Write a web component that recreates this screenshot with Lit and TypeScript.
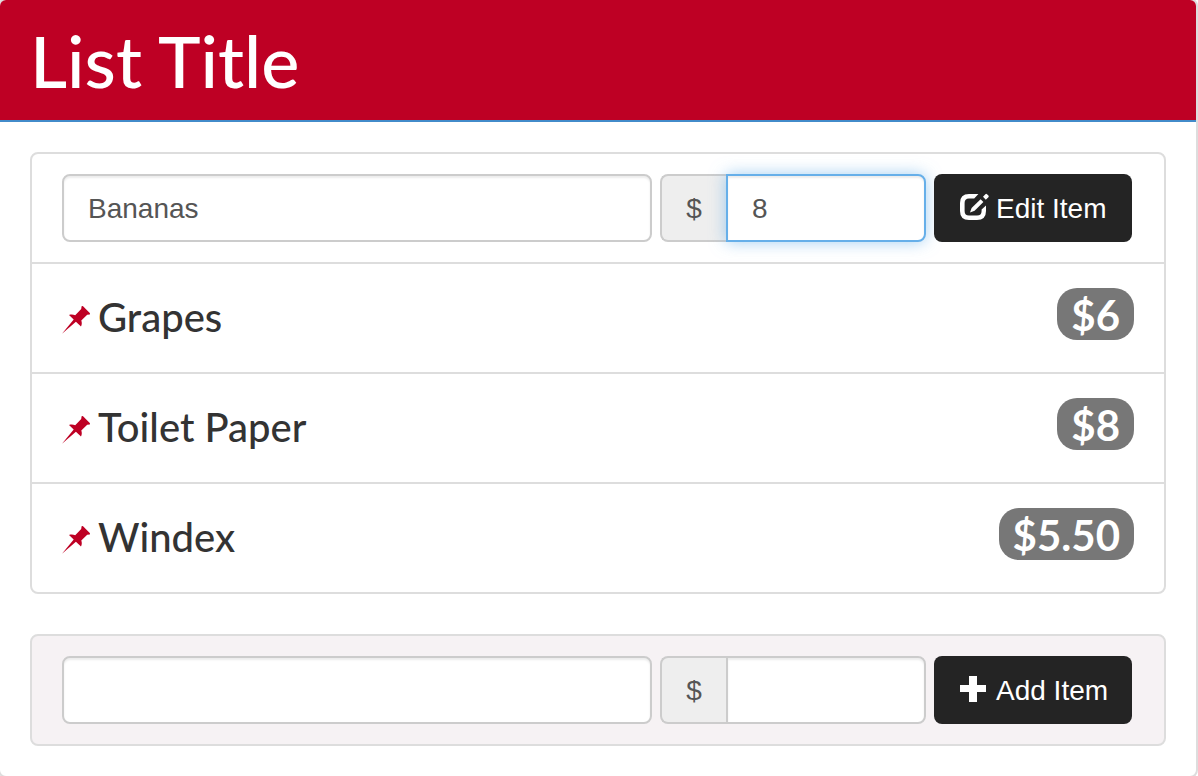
import { LitElement, html, css, svg } from "lit";
import { customElement, property, state } from "lit/decorators.js";

interface Item {
  name: string;
  price: string;
}

const pinIcon = svg`<svg class="pin" viewBox="0 0 28 28" aria-hidden="true">
  <path d="M19.6 0.2 L20.8 0 L28 7.2 L27.8 8.6 L25.2 8.8 L19.3 14.6 C20 16.6 20 18.8 19 20.6 L13.9 15.8 L0 27.8 L11.7 13.6 L7 8.9 C9 8.4 11.2 8.4 13.2 9.2 L19.2 2.9 Z"/>
</svg>`;

const editIcon = svg`<svg class="icon" viewBox="0 1 28 28" aria-hidden="true">
  <path d="M18.4 1 H9 Q0 1 0 10 V18 Q0 27 9 27 H17 Q26 27 26 18 V12.4 L21.6 16.6 V18 Q21.6 22.6 17 22.6 H9 Q4.6 22.6 4.6 18 V10 Q4.6 5.4 9 5.4 H14.2 Z"/>
  <path d="M20.6 6.2 L23.4 9 L14.6 17.8 L10 19.4 L11.6 15 Z"/>
  <path d="M23 3.8 L25.4 1.2 Q26.2 0.4 27 1.2 L28.4 2.6 Q29.2 3.4 28.4 4.2 L25.8 6.8 Z"/>
</svg>`;

const plusIcon = svg`<svg class="icon" viewBox="0 1 28 28" aria-hidden="true">
  <path d="M9 1 H17 V10 H26 V17 H17 V27 H9 V17 H0 V10 H9 Z"/>
</svg>`;

@customElement("item-form")
export class ItemForm extends LitElement {
  @property() name = "";
  @property() price = "";
  @property() label = "";
  @property({ type: Boolean }) editing = false;

  static styles = css`
    :host {
      display: block;
    }
    .form {
      display: flex;
      gap: 8px;
      padding: 20px 32px 20px 30px;
      margin: 0;
    }
    .control,
    .addon,
    .button {
      box-sizing: border-box;
      height: 68px;
      font: 28px/38px "Liberation Sans", Arial, sans-serif;
      border-radius: 8px;
    }
    .control {
      min-width: 0;
      margin: 0;
      padding: 14px 24px 12px;
      color: #555;
      background: #fff;
      border: 2px solid #ccc;
      box-shadow: inset 0 2px 2px rgba(0, 0, 0, 0.075);
      outline: none;
    }
    .control:focus,
    .highlighted {
      border-color: #66afe9;
      box-shadow: inset 0 2px 2px rgba(0, 0, 0, 0.075),
        0 0 16px rgba(102, 175, 233, 0.6);
    }
    .name {
      flex: 1;
    }
    .group {
      display: flex;
      flex: none;
    }
    .addon {
      width: 66px;
      padding: 14px 0 12px;
      text-align: center;
      color: #555;
      background: #eee;
      border: 2px solid #ccc;
      border-right: 0;
      border-radius: 8px 0 0 8px;
    }
    .price {
      width: 200px;
      border-radius: 0 8px 8px 0;
    }
    .button {
      display: flex;
      flex: none;
      align-items: center;
      gap: 8px;
      width: 198px;
      margin: 0;
      padding: 0 0 0 26px;
      color: #fff;
      background: #242424;
      border: 0;
      white-space: nowrap;
      cursor: pointer;
    }
    .text {
      padding-top: 2px;
    }
    .icon {
      width: 28px;
      height: 28px;
      fill: currentColor;
      overflow: visible;
    }
  `;

  render() {
    return html`
      <form class="form" @submit=${(e: Event) => e.preventDefault()}>
        <input class="control name" type="text" aria-label="Item name" .value=${this.name} />
        <div class="group">
          <label class="addon" for="price">$</label>
          <input
            class="control price ${this.editing ? "highlighted" : ""}"
            id="price"
            type="text"
            .value=${this.price}
          />
        </div>
        <button class="button" type="submit">
          ${this.editing ? editIcon : plusIcon}<span class="text">${this.label}</span>
        </button>
      </form>
    `;
  }
}

@customElement("app-root")
export class AppRoot extends LitElement {
  @state() items: Item[] = [
    { name: "Grapes", price: "$6" },
    { name: "Toilet Paper", price: "$8" },
    { name: "Windex", price: "$5.50" },
  ];

  static styles = css`
    :host {
      display: block;
      overflow: hidden;
      background: #fff;
      color: #333;
      font-family: Lato, sans-serif;
    }
    .panel {
      margin: -2px 0 -2px -2px;
      border: 2px solid #ddd;
      border-radius: 8px;
    }
    .heading {
      padding: 20px 30px;
      color: #fff;
      background: #be0024;
      border-bottom: 2px solid #428bca;
      border-radius: 6px 6px 0 0;
    }
    .title {
      margin: 0;
      font-size: 72px;
      line-height: 80px;
      font-weight: 500;
    }
    .body {
      display: flex;
      flex-direction: column;
      gap: 40px;
      padding: 30px;
    }
    .list,
    .add {
      margin: 0;
      padding: 0;
      list-style: none;
      border: 2px solid #ddd;
      border-radius: 8px;
    }
    .add {
      background: #f6f2f4;
    }
    .row + .row {
      border-top: 2px solid #ddd;
    }
    .item {
      display: flex;
      align-items: flex-start;
      padding: 24px 30px 26px;
    }
    .label {
      display: flex;
      flex: 1;
      align-items: center;
      gap: 8px;
      margin: 0;
      font-size: 40px;
      line-height: 58px;
      font-weight: 500;
    }
    .pin {
      width: 28px;
      height: 28px;
      margin-top: 6px;
      fill: #be0024;
    }
    .badge {
      padding: 2px 14px 0;
      font-size: 42px;
      line-height: 50px;
      font-weight: 700;
      font-kerning: none;
      color: #fff;
      background: #777;
      border-radius: 20px;
    }
  `;

  render() {
    return html`
      <main class="panel">
        <header class="heading"><h1 class="title">List Title</h1></header>
        <div class="body">
          <ul class="list">
            <li class="row">
              <item-form name="Bananas" price="8" label="Edit Item" editing></item-form>
            </li>
            ${this.items.map(
              (item) => html`
                <li class="row item">
                  <h2 class="label">${pinIcon}<span>${item.name}</span></h2>
                  <span class="badge">${item.price}</span>
                </li>
              `
            )}
          </ul>
          <section class="add">
            <item-form label="Add Item"></item-form>
          </section>
        </div>
      </main>
    `;
  }
}
